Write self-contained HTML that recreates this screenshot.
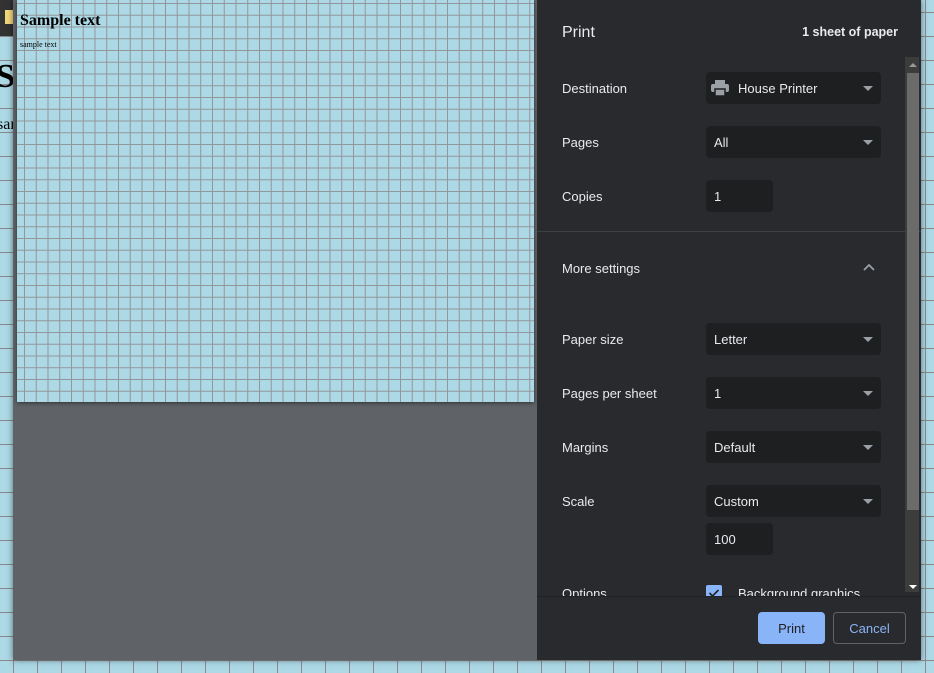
<!DOCTYPE html>
<html><head><style>
*{margin:0;padding:0;box-sizing:border-box}
body{width:934px;height:673px;overflow:hidden;position:relative;font-family:"Liberation Sans",sans-serif;
background-color:#add8e6;
background-image:linear-gradient(to right,#8a8a8a 1px,transparent 1px),linear-gradient(to bottom,#8a8a8a 1px,transparent 1px);
background-size:24px 24px;background-position:13px 12px}
.topbar{position:absolute;left:0;top:0;width:20px;height:36px;background:#333}
.yel{position:absolute;left:5px;top:10px;width:9px;height:14px;background:#f5d77a}
.bigS{position:absolute;left:-4px;top:58px;font:bold 34px "Liberation Serif",serif;color:#000}
.sar{position:absolute;left:-3px;top:116px;font:16px "Liberation Serif",serif;color:#000}
.dlg{position:absolute;left:13px;top:0;width:908px;height:660px;background:#5f6368;box-shadow:0 0 6px rgba(0,0,0,.5)}
.paper{position:absolute;left:4px;top:0;width:517px;height:402px;background-color:#add8e6;
background-image:linear-gradient(to right,#929699 1px,transparent 1px),linear-gradient(to bottom,#929699 1px,transparent 1px);
background-size:11.75px 11.75px;background-position:7px 3px;box-shadow:0 1px 4px rgba(0,0,0,.5)}
.paper h1{position:absolute;left:3px;top:12px;font:bold 16px "Liberation Serif",serif;color:#000}
.paper p{position:absolute;left:3px;top:40px;font:8px "Liberation Serif",serif;color:#000}
.side{position:absolute;left:524px;top:0;width:384px;height:660px;background:#292a2d;color:#e8eaed;font-size:13px}
.t{position:absolute;left:25px}
.sel{position:absolute;left:169px;width:175px;height:32px;background:#1e1f21;border-radius:4px;padding-left:8px;line-height:34px;font-size:13px;color:#e8eaed}
.sel:after{content:"";position:absolute;right:8px;top:14px;border-left:5px solid transparent;border-right:5px solid transparent;border-top:5px solid #9aa0a6}
.inp{position:absolute;left:169px;width:67px;height:32px;background:#1e1f21;border-radius:4px;padding-left:8px;line-height:34px}
.hr{position:absolute;left:0;width:384px;height:1px;background:#3c4043}
</style></head><body>
<div class="topbar"></div><div class="yel"></div>
<div class="bigS">S</div><div class="sar">sar</div>
<div class="dlg">
<div class="paper"><h1>Sample text</h1><p>sample text</p></div>
<div class="side">
<div style="position:absolute;left:0;top:0;width:384px;height:596px;overflow:hidden">
<div class="t" style="top:24px;font-size:16px">Print</div>
<div style="position:absolute;right:23px;top:25px;font-weight:bold;font-size:12.5px">1 sheet of paper</div>
<div class="t" style="top:81px">Destination</div>
<div class="sel" style="top:72px;padding-left:32px"><svg style="position:absolute;left:5px;top:8px" width="18" height="16" viewBox="0 0 18 16"><rect x="4" y="0" width="10" height="4" fill="#9aa0a6"/><rect x="0" y="4" width="18" height="8" rx="2" fill="#9aa0a6"/><rect x="4" y="9" width="10" height="7" fill="#9aa0a6" stroke="#1e1f21" stroke-width="1.5"/></svg>House Printer</div>
<div class="t" style="top:135px">Pages</div>
<div class="sel" style="top:126px">All</div>
<div class="t" style="top:189px">Copies</div>
<div class="inp" style="top:180px">1</div>
<div class="hr" style="top:231px"></div>
<div class="t" style="top:261px">More settings</div>
<svg style="position:absolute;left:326px;top:263px" width="12" height="8" viewBox="0 0 12 8"><path d="M1 7L6 2L11 7" stroke="#9aa0a6" stroke-width="1.8" fill="none"/></svg>
<div class="t" style="top:332px">Paper size</div>
<div class="sel" style="top:323px">Letter</div>
<div class="t" style="top:386px">Pages per sheet</div>
<div class="sel" style="top:377px">1</div>
<div class="t" style="top:440px">Margins</div>
<div class="sel" style="top:431px">Default</div>
<div class="t" style="top:494px">Scale</div>
<div class="sel" style="top:485px">Custom</div>
<div class="inp" style="top:523px">100</div>
<div class="t" style="top:586px">Options</div>
<div style="position:absolute;left:169px;top:585px;width:16px;height:16px;background:#8ab4f8;border-radius:2px"><svg width="16" height="16" viewBox="0 0 16 16"><path d="M3.5 8L6.5 11L12.5 5" stroke="#202124" stroke-width="1.6" fill="none"/></svg></div>
<div style="position:absolute;left:201px;top:586px">Background graphics</div>
</div>
<div style="position:absolute;left:368px;top:57px;width:14px;height:535px;background:#3c3c3c"></div>
<div style="position:absolute;left:370px;top:73px;width:12px;height:437px;background:#6b6b6b"></div>
<div style="position:absolute;left:372px;top:63px;border-left:4px solid transparent;border-right:4px solid transparent;border-bottom:4px solid #9a9a9a"></div>
<div style="position:absolute;left:372px;top:585px;border-left:4px solid transparent;border-right:4px solid transparent;border-top:4px solid #fff"></div>
<div style="position:absolute;left:0;top:596px;width:384px;height:64px;background:#292a2d;border-top:1px solid #202124"></div>
<div style="position:absolute;left:221px;top:612px;width:67px;height:32px;background:#8ab4f8;border-radius:4px;color:#202124;text-align:center;line-height:33px">Print</div>
<div style="position:absolute;left:296px;top:612px;width:73px;height:32px;border:1px solid #5f6368;border-radius:4px;color:#8ab4f8;text-align:center;line-height:31px">Cancel</div>
</div>
</div>
</body></html>
